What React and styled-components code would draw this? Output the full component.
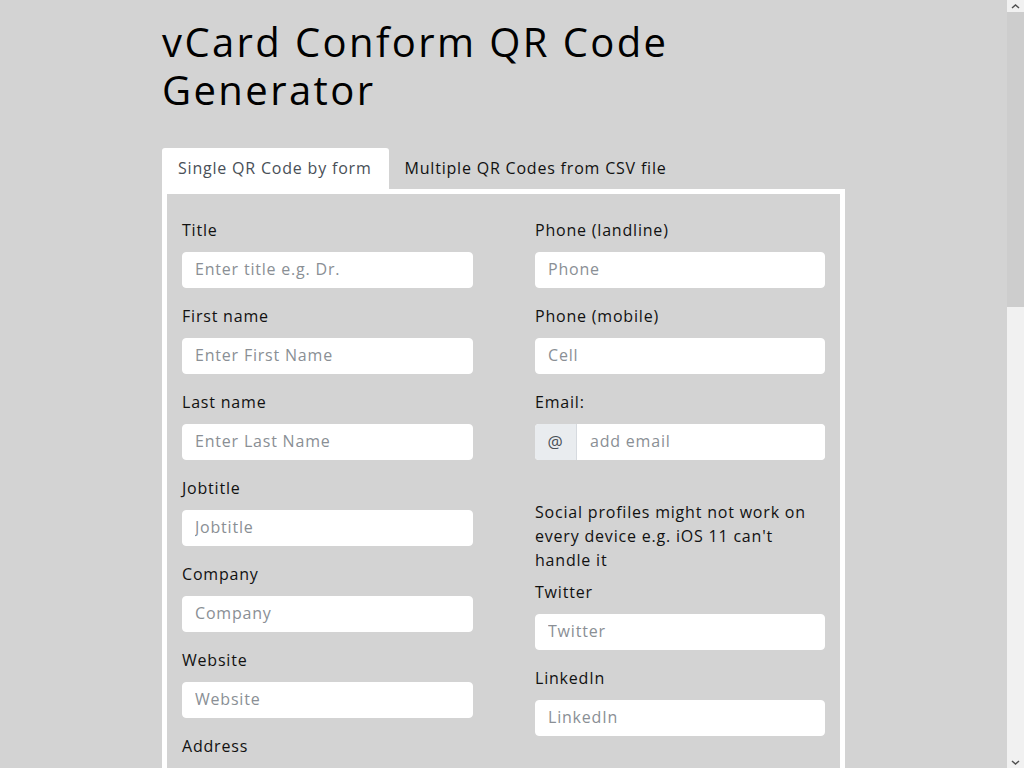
import React from 'react';
import styled, { createGlobalStyle } from 'styled-components';

const GlobalStyle = createGlobalStyle`
  html, body {
    margin: 0;
    padding: 0;
    background: #d3d3d3;
  }
  body {
    font-family: "Open Sans", "Liberation Sans", sans-serif;
    font-size: 16px;
    line-height: 24px;
    letter-spacing: 0.8px;
    color: #111;
    padding-right: 17px;
  }
  * {
    box-sizing: border-box;
  }
`;

export const Page = styled.div`
  width: 683px;
  margin: 0 auto;
  padding: 18px 0 60px;
`;

export const Heading = styled.h1`
  font-size: 40px;
  line-height: 48px;
  font-weight: 400;
  margin: 0 0 34px;
  letter-spacing: 2.4px;
  color: #000;
`;

export const Tabs = styled.div`
  display: flex;
`;

export const Tab = styled.div`
  height: 41px;
  padding: 8px 17px 9px 16px;
  font-size: 16px;
  line-height: 24px;
  background: ${p => (p.active ? '#fff' : 'transparent')};
  color: ${p => (p.active ? '#495057' : '#111')};
  border-radius: 3px 3px 0 0;
  cursor: pointer;
`;

export const Card = styled.div`
  border: 5px solid #fff;
  padding: 24px 15px 24px;
`;

export const Columns = styled.div`
  display: grid;
  grid-template-columns: 291px 290px;
  column-gap: 62px;
`;

export const Column = styled.div`
  display: flex;
  flex-direction: column;
`;

export const Group = styled.div`
  margin-bottom: 16px;
`;

export const Label = styled.label`
  display: block;
  font-size: 16px;
  line-height: 24px;
  margin-bottom: 10px;
  color: #111;
`;

export const Input = styled.input`
  display: block;
  width: 100%;
  height: 36px;
  padding: 5px 12px 7px;
  border: 1px solid #fff;
  border-radius: 4px;
  background: #fff;
  font-family: inherit;
  font-size: 16px;
  letter-spacing: 0.8px;
  color: #222;
  outline: none;

  &::placeholder {
    color: #8a8f95;
  }
`;

export const InputGroup = styled.div`
  display: flex;
  height: 36px;
  border-radius: 4px;
  overflow: hidden;
  background: #fff;
`;

export const Addon = styled.span`
  width: 42px;
  flex: none;
  display: flex;
  align-items: center;
  justify-content: center;
  background: #e9ecef;
  color: #495057;
  border-right: 1px solid #d6dadf;
  font-size: 17px;
`;

export const Note = styled.p`
  margin: 24px 0 8px;
  font-size: 16px;
  line-height: 24px;
  color: #111;
`;

export const Button = styled.button`
  margin-top: 16px;
  height: 40px;
  padding: 0 20px;
  border: 0;
  border-radius: 4px;
  background: #343a40;
  color: #fff;
  font-family: inherit;
  font-size: 16px;
  cursor: pointer;
  align-self: flex-start;
`;

export const QrBox = styled.div`
  margin-top: 60px;
  height: 290px;
  width: 290px;
  background: #fff;
  border-radius: 4px;
`;

// fake classic scrollbar, sits over the right edge of the window
export const ScrollTrack = styled.div`
  position: fixed;
  top: 0;
  right: 0;
  width: 17px;
  height: 100vh;
  background: #f1f1f1;
  display: flex;
  flex-direction: column;
`;

export const ScrollArrow = styled.div`
  height: 12px;
  flex: none;
  display: flex;
  align-items: center;
  justify-content: center;
`;

export const ScrollThumb = styled.div`
  height: 295px;
  background: #cdcdcd;
`;

export const ScrollRest = styled.div`
  flex: 1;
`;

const Arrow = ({ down }) => (
  <svg width="9" height="5" viewBox="0 0 9 5">
    <path
      d={down ? 'M1 1 L4.5 4 L8 1' : 'M1 4 L4.5 1 L8 4'}
      fill="none"
      stroke="#505050"
      strokeWidth="1.5"
    />
  </svg>
);

const Field = ({ label, placeholder }) => (
  <Group>
    <Label>{label}</Label>
    <Input placeholder={placeholder} />
  </Group>
);

const left = [
  ['Title', 'Enter title e.g. Dr.'],
  ['First name', 'Enter First Name'],
  ['Last name', 'Enter Last Name'],
  ['Jobtitle', 'Jobtitle'],
  ['Company', 'Company'],
  ['Website', 'Website'],
  ['Address', 'Street'],
  ['Zip code', 'Zip'],
  ['City', 'City'],
  ['State', 'State'],
  ['Country', 'Country'],
  ['Birthday', 'YYYY-MM-DD'],
  ['Note', 'Note']
];

const App = () => (
  <>
    <GlobalStyle />
    <Page>
      <Heading>
        vCard Conform QR Code
        <br />
        Generator
      </Heading>
      <Tabs>
        <Tab active>Single QR Code by form</Tab>
        <Tab>Multiple QR Codes from CSV file</Tab>
      </Tabs>
      <Card>
        <Columns>
          <Column>
            {left.map(([l, p]) => (
              <Field key={l} label={l} placeholder={p} />
            ))}
            <Button>Generate QR Code</Button>
          </Column>
          <Column>
            <Field label="Phone (landline)" placeholder="Phone" />
            <Field label="Phone (mobile)" placeholder="Cell" />
            <Group>
              <Label>Email:</Label>
              <InputGroup>
                <Addon>@</Addon>
                <Input placeholder="add email" />
              </InputGroup>
            </Group>
            <Note>
              Social profiles might not work on every device e.g. iOS 11 can't
              handle it
            </Note>
            <Field label="Twitter" placeholder="Twitter" />
            <Field label="LinkedIn" placeholder="LinkedIn" />
            <QrBox />
          </Column>
        </Columns>
      </Card>
    </Page>
    <ScrollTrack>
      <ScrollArrow>
        <Arrow />
      </ScrollArrow>
      <ScrollThumb />
      <ScrollRest />
      <ScrollArrow>
        <Arrow down />
      </ScrollArrow>
    </ScrollTrack>
  </>
);

export default App;
